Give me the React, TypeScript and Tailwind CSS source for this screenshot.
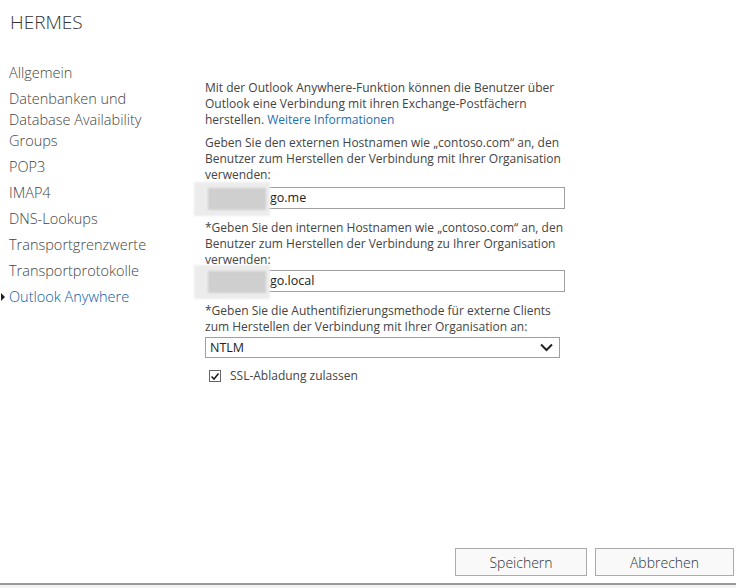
import React from 'react';

const navItems = [
  'Allgemein',
  'Datenbanken und Database Availability Groups',
  'POP3',
  'IMAP4',
  'DNS-Lookups',
  'Transportgrenzwerte',
  'Transportprotokolle',
  'Outlook Anywhere',
];

const font = { fontFamily: '"Segoe UI", "Open Sans", "Noto Sans", sans-serif' };

function Blurred() {
  return (
    <div className="pointer-events-none absolute left-[-12px] top-[-6px] h-[34px] w-[76px] bg-[#ececec] blur-[1px]">
      <div className="ml-[14px] mt-[6px] h-[22px] w-[58px] bg-[#cfcfcf]" />
    </div>
  );
}

function HostInput({ value, className = '' }: { value: string; className?: string }) {
  return (
    <div className={`relative h-[22px] w-[360px] border border-[#a0a0a0] bg-white ${className}`}>
      <span className="absolute left-[64px] top-[2px] text-[12.5px] leading-[16px] text-[#222]">{value}</span>
      <Blurred />
    </div>
  );
}

export default function App() {
  return (
    <div className="relative flex h-[588px] w-[736px] flex-col overflow-hidden bg-white text-[#333]" style={font}>
      <div className="flex flex-1">
        <div className="w-[195px] shrink-0">
          <h1 className="ml-[10px] mt-[10px] text-[19px] font-light leading-[24px] text-[#333]">HERMES</h1>
          <ul className="mt-[28px] flex flex-col gap-[5px]">
            {navItems.map((item) => {
              const active = item === 'Outlook Anywhere';
              return (
                <li key={item} className={`relative pl-[9px] pr-[40px] text-[14.5px] font-light leading-[21px] ${active ? 'text-[#0d5aa7]' : 'text-[#444]'}`}>
                  {active && <span className="absolute left-[1px] top-[7px] h-0 w-0 border-y-[4px] border-l-[4px] border-y-transparent border-l-[#222]" />}
                  {item}
                </li>
              );
            })}
          </ul>
        </div>
        <div className="mt-[80px] w-[380px] pl-[10px] text-[12px] leading-[16px] text-[#444]">
          <p className="w-[362px]">
            Mit der Outlook Anywhere-Funktion können die Benutzer über Outlook eine Verbindung mit ihren Exchange-Postfächern herstellen.{' '}
            <span className="text-[#1e6fb5]">Weitere Informationen</span>
          </p>
          <p className="mt-[7px] w-[362px]">
            Geben Sie den externen Hostnamen wie „contoso.com“ an, den Benutzer zum Herstellen der Verbindung mit Ihrer Organisation verwenden:
          </p>
          <HostInput value="go.me" className="mt-[4px]" />
          <p className="mt-[11px] w-[362px]">
            *Geben Sie den internen Hostnamen wie „contoso.com“ an, den Benutzer zum Herstellen der Verbindung zu Ihrer Organisation verwenden:
          </p>
          <HostInput value="go.local" className="mt-[2px]" />
          <p className="mt-[11px] w-[362px]">
            *Geben Sie die Authentifizierungsmethode für externe Clients zum Herstellen der Verbindung mit Ihrer Organisation an:
          </p>
          <div className="mt-[2px] flex h-[21px] w-[355px] items-center justify-between border border-[#a0a0a0] pl-[4px] pr-[6px] text-[12.5px] text-[#222]">
            <span>NTLM</span>
            <svg width="13" height="9" viewBox="0 0 13 9">
              <path d="M1 1.5 L6.5 7 L12 1.5" fill="none" stroke="#222" strokeWidth="2" />
            </svg>
          </div>
          <label className="mt-[10px] flex items-center gap-[9px] pl-[4px] text-[#444]">
            <span className="flex h-[12px] w-[12px] items-center justify-center border border-[#666] bg-white">
              <svg width="10" height="9" viewBox="0 0 10 9">
                <path d="M1.5 4.5 L4 7 L8.5 1.5" fill="none" stroke="#222" strokeWidth="1.6" />
              </svg>
            </span>
            SSL-Abladung zulassen
          </label>
        </div>
      </div>
      <div className="flex justify-end gap-[8px] pr-[2px] pb-[7px]">
        <button className="h-[28px] w-[132px] border border-[#ababab] bg-[#f9f9f9] text-[14px] font-light text-[#333]">Speichern</button>
        <button className="h-[28px] w-[139px] border border-[#ababab] bg-[#f9f9f9] text-[14px] font-light text-[#333]">Abbrechen</button>
      </div>
      <div className="h-[5px] border-t-2 border-[#9a9a9a] bg-[#f2f2f2]" />
    </div>
  );
}
